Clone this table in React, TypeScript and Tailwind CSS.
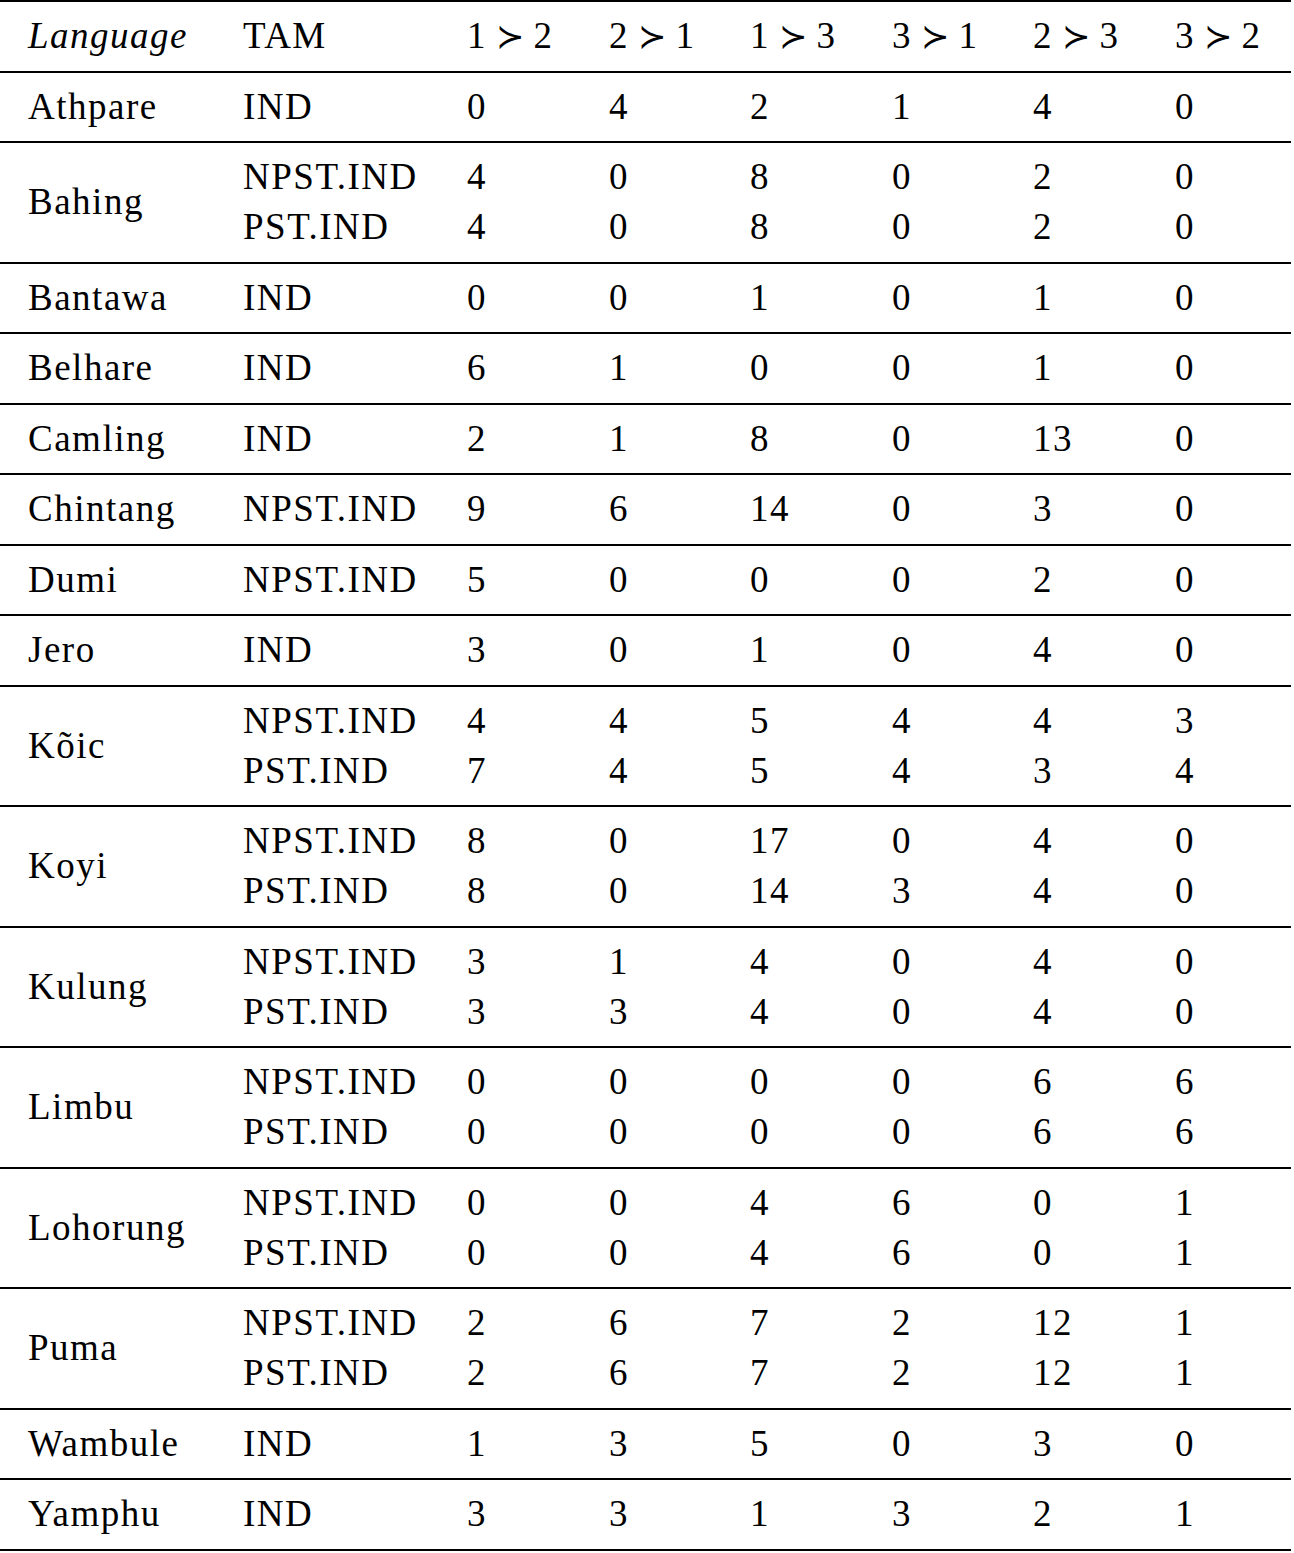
import React from "react";

type Row = { lang: string; tams: string[]; vals: number[][] };

const rows: Row[] = [
  { lang: "Athpare", tams: ["IND"], vals: [[0, 4, 2, 1, 4, 0]] },
  { lang: "Bahing", tams: ["NPST.IND", "PST.IND"], vals: [[4, 0, 8, 0, 2, 0], [4, 0, 8, 0, 2, 0]] },
  { lang: "Bantawa", tams: ["IND"], vals: [[0, 0, 1, 0, 1, 0]] },
  { lang: "Belhare", tams: ["IND"], vals: [[6, 1, 0, 0, 1, 0]] },
  { lang: "Camling", tams: ["IND"], vals: [[2, 1, 8, 0, 13, 0]] },
  { lang: "Chintang", tams: ["NPST.IND"], vals: [[9, 6, 14, 0, 3, 0]] },
  { lang: "Dumi", tams: ["NPST.IND"], vals: [[5, 0, 0, 0, 2, 0]] },
  { lang: "Jero", tams: ["IND"], vals: [[3, 0, 1, 0, 4, 0]] },
  { lang: "Kõic", tams: ["NPST.IND", "PST.IND"], vals: [[4, 4, 5, 4, 4, 3], [7, 4, 5, 4, 3, 4]] },
  { lang: "Koyi", tams: ["NPST.IND", "PST.IND"], vals: [[8, 0, 17, 0, 4, 0], [8, 0, 14, 3, 4, 0]] },
  { lang: "Kulung", tams: ["NPST.IND", "PST.IND"], vals: [[3, 1, 4, 0, 4, 0], [3, 3, 4, 0, 4, 0]] },
  { lang: "Limbu", tams: ["NPST.IND", "PST.IND"], vals: [[0, 0, 0, 0, 6, 6], [0, 0, 0, 0, 6, 6]] },
  { lang: "Lohorung", tams: ["NPST.IND", "PST.IND"], vals: [[0, 0, 4, 6, 0, 1], [0, 0, 4, 6, 0, 1]] },
  { lang: "Puma", tams: ["NPST.IND", "PST.IND"], vals: [[2, 6, 7, 2, 12, 1], [2, 6, 7, 2, 12, 1]] },
  { lang: "Wambule", tams: ["IND"], vals: [[1, 3, 5, 0, 3, 0]] },
  { lang: "Yamphu", tams: ["IND"], vals: [[3, 3, 1, 3, 2, 1]] },
];

const heads: [string, string][] = [
  ["1", "2"],
  ["2", "1"],
  ["1", "3"],
  ["3", "1"],
  ["2", "3"],
  ["3", "2"],
];

const gridCls =
  "grid grid-cols-[243px_224px_142px_141px_142px_141px_142px_1fr] border-b-2 border-black pt-[9px] pb-[9.5px]";

export default function App() {
  return (
    <div
      className="w-[1291px] bg-white text-black text-[37px] leading-[50px] tracking-[1.5px]"
      style={{ fontFamily: '"Liberation Serif", "DejaVu Serif", serif' }}
    >
      <div className="border-t-2 border-black">
        <div className={gridCls}>
          <div className="pl-[28px] italic">Language</div>
          <div>TAM</div>
          {heads.map(([a, b]) => (
            <div key={a + b} className="tracking-normal flex items-center">
              <span>{a}</span>
              <span
                className="mx-[10px] text-[34px] font-light"
                style={{ fontFamily: '"DejaVu Sans", "Noto Sans", sans-serif' }}
              >
                ≻
              </span>
              <span>{b}</span>
            </div>
          ))}
          <div />
        </div>
        {rows.map((r) => (
          <div key={r.lang} className={gridCls}>
            <div className="pl-[28px] flex items-center">{r.lang}</div>
            <div className="flex flex-col">
              {r.tams.map((t) => (
                <div key={t}>{t}</div>
              ))}
            </div>
            {[0, 1, 2, 3, 4, 5].map((c) => (
              <div key={c} className="flex flex-col">
                {r.vals.map((v, i) => (
                  <div key={i}>{v[c]}</div>
                ))}
              </div>
            ))}
            <div />
          </div>
        ))}
      </div>
    </div>
  );
}
